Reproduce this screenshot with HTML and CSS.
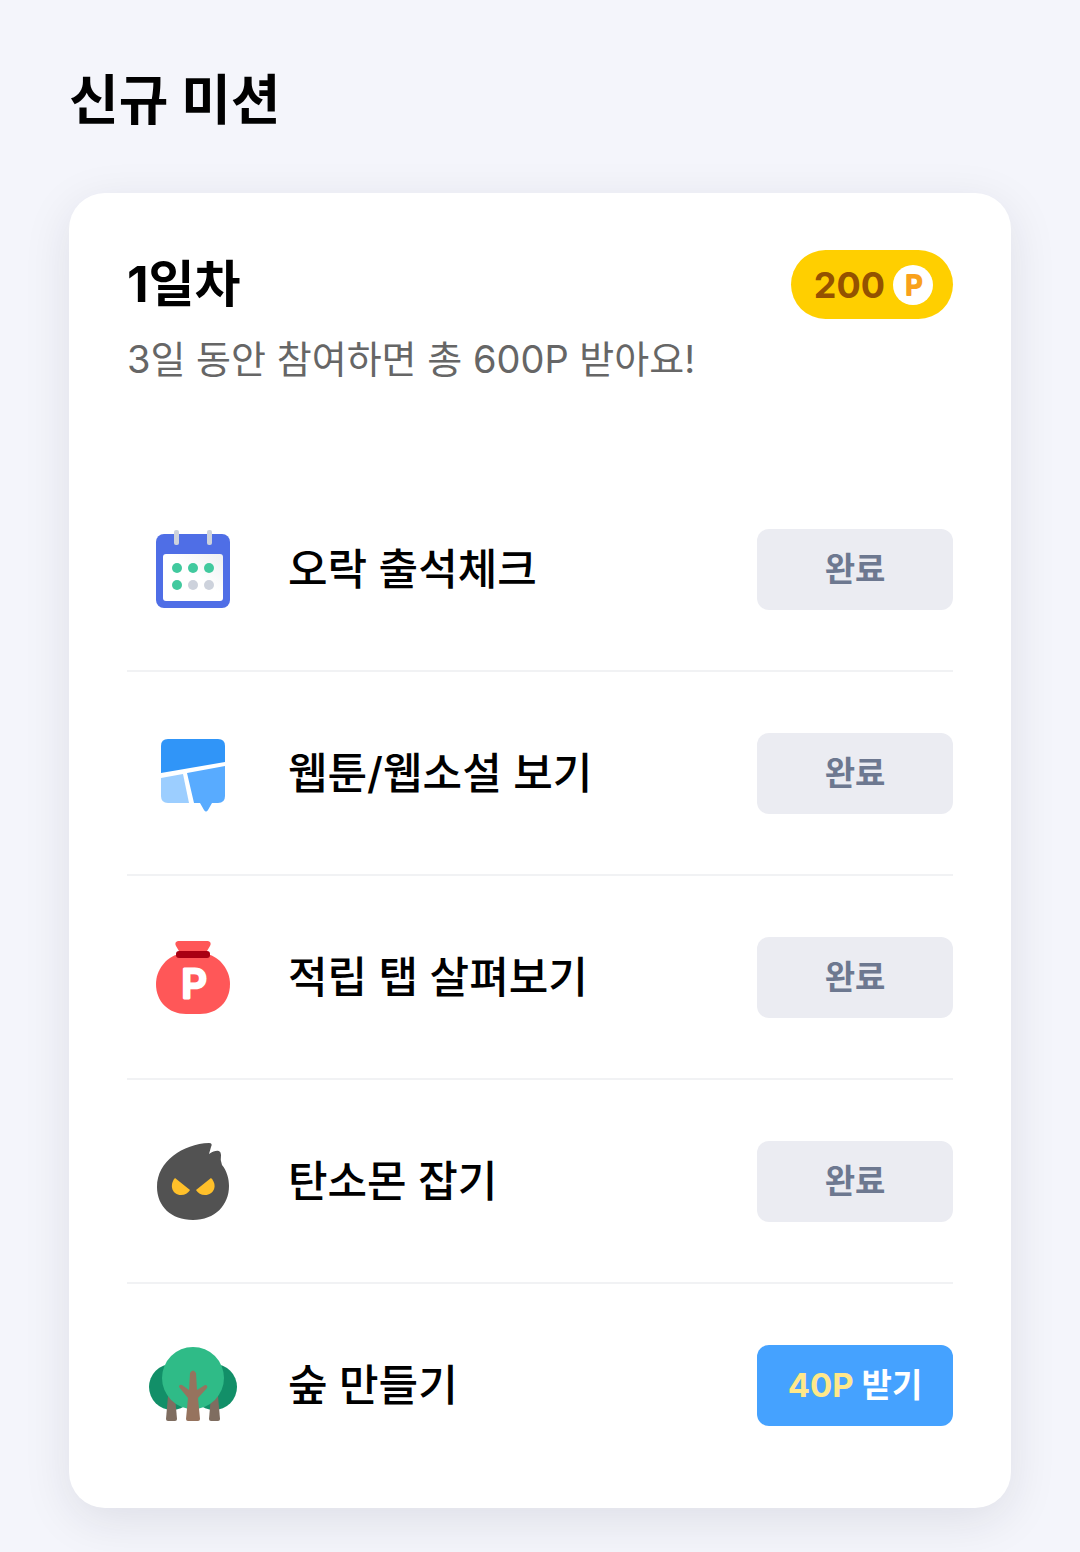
FILE: index.html
```html
<!DOCTYPE html>
<html lang="ko">
<head>
  <meta charset="UTF-8"/>
  <meta name="viewport" content="width=device-width, initial-scale=1.0"/>
  <title>신규 미션</title>
  <link rel="stylesheet" href="styles.css">
</head>
<body>

  <h1 class="title">신규 미션</h1>

  <section class="card">
    <!-- Card header -->
    <div class="card-header">
      <h2 class="day">1일차</h2>
      <div class="point-badge">
        <span>200</span>
        <svg class="coin" viewBox="0 0 40 40" aria-hidden="true">
          <circle cx="20" cy="20" r="20" fill="#fff"/>
          <text class="coin-p" x="21" y="30" text-anchor="middle">P</text>
        </svg>
      </div>
    </div>
    <p class="desc">3일 동안 참여하면 총 600P 받아요!</p>

    <!-- Missions -->
    <ul class="mission-list">
      <li class="mission">
        <svg class="icon" viewBox="0 0 88 88" aria-hidden="true">
          <defs>
            <linearGradient id="paper" x1="0" y1="1" x2="1" y2="0">
              <stop offset="0.55" stop-color="#fff"/>
              <stop offset="1" stop-color="#eeeff2"/>
            </linearGradient>
          </defs>
          <rect x="7" y="8" width="74" height="74" rx="8" fill="#4f6ee6"/>
          <rect x="14" y="28" width="60" height="47" rx="3" fill="url(#paper)"/>
          <rect x="25" y="4" width="5" height="15" rx="2" fill="#cdd2dc"/>
          <rect x="58" y="4" width="5" height="15" rx="2" fill="#cdd2dc"/>
          <g fill="#41c99e">
            <circle cx="28" cy="42" r="5"/>
            <circle cx="44" cy="42" r="5"/>
            <circle cx="60" cy="42" r="5"/>
            <circle cx="28" cy="59" r="5"/>
          </g>
          <circle cx="44" cy="59" r="5" fill="#cdd2dc"/>
          <circle cx="60" cy="59" r="5" fill="#cdd2dc"/>
        </svg>
        <span class="mission-name">오락 출석체크</span>
        <button class="btn" type="button" disabled>완료</button>
      </li>

      <li class="mission">
        <svg class="icon" viewBox="0 0 88 88" aria-hidden="true">
          <path d="M19 9H69Q76 9 76 16V32L12 43V16Q12 9 19 9Z" fill="#3095f8"/>
          <path d="M12 48L34 44L40 73H19Q12 73 12 66Z" fill="#9cceff"/>
          <path d="M38 43L76 36V66Q76 73 69 73H63L59 80Q57 83 55 80L51 73H45Z" fill="#58abff"/>
        </svg>
        <span class="mission-name">웹툰/웹소설 보기</span>
        <button class="btn" type="button" disabled>완료</button>
      </li>

      <li class="mission">
        <svg class="icon" viewBox="0 0 88 88" aria-hidden="true">
          <path d="M29 7H59Q63 8 61 12L58 17H30L27 12Q25 8 29 7Z" fill="#ff5758"/>
          <path d="M30 20H58C71 23 81 36 81 50C81 68 68 80 51 80H37C20 80 7 68 7 50C7 36 17 23 30 20Z" fill="#ff5758"/>
          <rect x="27" y="17" width="34" height="7" rx="3" fill="#a90013"/>
          <text class="bag-p" x="45" y="64" text-anchor="middle">P</text>
        </svg>
        <span class="mission-name">적립 탭 살펴보기</span>
        <button class="btn" type="button" disabled>완료</button>
      </li>

      <li class="mission">
        <svg class="icon" viewBox="0 0 88 88" aria-hidden="true">
          <path d="M60 5Q64 5 62 9L60 16Q66 12 70 13Q72 14 72 17Q71 22 73 27C78 33 80 41 80 48C80 67 66 82 44 82S8 68 8 49C8 23 34 6 60 5Z" fill="#525252"/>
          <path d="M26 40L41 52Q38 57 32 57C23 57 20 47 26 40Z" fill="#ffc02a"/>
          <path d="M62 40L47 52Q50 57 56 57C65 57 69 47 62 40Z" fill="#ffc02a"/>
        </svg>
        <span class="mission-name">탄소몬 잡기</span>
        <button class="btn" type="button" disabled>완료</button>
      </li>

      <li class="mission">
        <svg class="icon" viewBox="0 0 88 88" aria-hidden="true">
          <circle cx="23" cy="45" r="23" fill="#128f68"/>
          <circle cx="65" cy="45" r="23" fill="#128f68"/>
          <path d="M19 54H26L28 77Q28 79 26 79H19Q17 79 17 77Z" fill="#7f6d60"/>
          <path d="M62 54H69L71 77Q71 79 69 79H62Q60 79 60 77Z" fill="#7f6d60"/>
          <circle cx="44" cy="36" r="31" fill="#2fbb87"/>
          <path d="M41 31Q44 26 47 31L48 48L56 43Q59 43 58 46L49 56L51 77Q51 79 49 79H39Q37 79 37 77L39 56L30 45Q30 42 33 43L40 48Z" fill="#96735e"/>
        </svg>
        <span class="mission-name">숲 만들기</span>
        <button class="btn active" type="button"><span class="reward">40P</span> 받기</button>
      </li>
    </ul>
  </section>

</body>
</html>
```
FILE: styles.css
```css
* {
  margin: 0; padding: 0;
  box-sizing: border-box;
}

body {
  font-family: Inter, "Noto Sans CJK KR", sans-serif;
  color: #000;
  background: #f4f5fb;
  padding: 65px 69px 44px;
}

.title {
  font-size: 54px;
  line-height: 72px;
  font-weight: 700;
  margin-bottom: 56px;
}

.card {
  background: #fff;
  border-radius: 36px;
  padding: 57px 58px 22px;
  box-shadow: 0 12px 48px rgba(30, 30, 50, 0.1);
}

.card-header {
  display: flex;
  align-items: center;
  justify-content: space-between;
}

.day {
  font-size: 50px;
  line-height: 69px;
  font-weight: 700;
}

.point-badge {
  display: flex;
  align-items: center;
  gap: 8px;
  height: 69px;
  padding: 0 20px 0 23px;
  border-radius: 35px;
  background: #ffcf00;
  color: #945200;
  font-size: 36px;
  font-weight: 700;
}

.coin {
  width: 40px;
  height: 40px;
}

.coin-p {
  font-size: 27px;
  font-weight: 500;
  fill: #f9a11b;
  stroke: #f9a11b;
  stroke-width: 2px;
  stroke-linejoin: round;
}

.desc {
  font-size: 38px;
  line-height: 56px;
  color: #666;
  margin: 12px 0 81px;
}

.mission-list {
  list-style: none;
}

.mission {
  display: flex;
  align-items: center;
  padding: 61px 0 60px;
  border-bottom: 2px solid #f1f2f4;
}

.mission:last-child {
  border-bottom: none;
}

.icon {
  width: 88px;
  height: 88px;
  margin: -4px 51px -4px 22px;
}

.bag-p {
  font-size: 40px;
  font-weight: 500;
  fill: #fff;
  stroke: #fff;
  stroke-width: 3px;
  stroke-linejoin: round;
}

.mission-name {
  flex: 1;
  font-size: 43px;
  line-height: 60px;
  font-weight: 500;
  padding-bottom: 2px;
}

.btn {
  width: 196px;
  height: 81px;
  padding-bottom: 6px;
  border: none;
  border-radius: 12px;
  background: #ebecf2;
  color: #6d7890;
  font-family: inherit;
  font-size: 33px;
  font-weight: 700;
}

.btn.active {
  background: #45a2ff;
  color: #fff;
  cursor: pointer;
}

.reward {
  color: #ffe88a;
}

@media (max-width: 700px) {
  body { padding: 32px 16px; }
  .card { padding: 32px 20px 12px; }
  .icon { margin: 0 16px 0 0; }
  .mission { padding: 32px 0; }
  .mission-name { font-size: 28px; }
  .btn { width: 140px; font-size: 24px; }
}
```
